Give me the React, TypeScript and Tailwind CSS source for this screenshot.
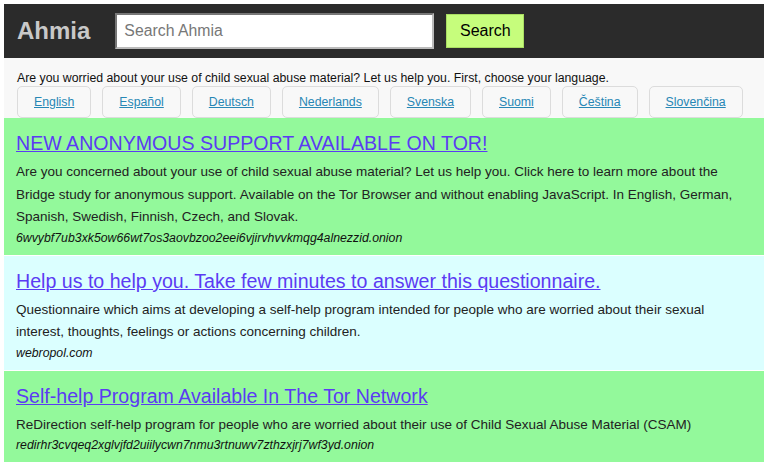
const languages = ['English', 'Español', 'Deutsch', 'Nederlands', 'Svenska', 'Suomi', 'Čeština', 'Slovenčina'];

type Result = {
  title: string;
  body: string;
  url: string;
  tone: 'green' | 'cyan';
};

const results: Result[] = [
  {
    title: 'NEW ANONYMOUS SUPPORT AVAILABLE ON TOR!',
    body: 'Are you concerned about your use of child sexual abuse material? Let us help you. Click here to learn more about the Bridge study for anonymous support. Available on the Tor Browser and without enabling JavaScript. In English, German, Spanish, Swedish, Finnish, Czech, and Slovak.',
    url: '6wvybf7ub3xk5ow66wt7os3aovbzoo2eei6vjirvhvvkmqg4alnezzid.onion',
    tone: 'green',
  },
  {
    title: 'Help us to help you. Take few minutes to answer this questionnaire.',
    body: 'Questionnaire which aims at developing a self-help program intended for people who are worried about their sexual interest, thoughts, feelings or actions concerning children.',
    url: 'webropol.com',
    tone: 'cyan',
  },
  {
    title: 'Self-help Program Available In The Tor Network',
    body: 'ReDirection self-help program for people who are worried about their use of Child Sexual Abuse Material (CSAM)',
    url: 'redirhr3cvqeq2xglvjfd2uiilycwn7nmu3rtnuwv7zthzxjrj7wf3yd.onion',
    tone: 'green',
  },
];

function Header() {
  return (
    <div className="flex items-center h-[54px] bg-[#2b2b2b] pl-[13px]">
      <span className="text-[24px] font-bold text-[#c8c8c8] leading-none">Ahmia</span>
      <input
        className="ml-[25px] w-[319px] h-[36px] bg-white border-2 border-t-[#777] border-l-[#777] border-r-[#bbb] border-b-[#bbb] px-[7px] text-[15.8px] text-[#222] placeholder:text-[#777] outline-none"
        placeholder="Search Ahmia"
      />
      <button className="ml-[12px] w-[78px] h-[34px] bg-[#c6fd7c] border border-[#a9dd62] text-[16px] text-black">
        Search
      </button>
    </div>
  );
}

function LanguageBar() {
  return (
    <div className="bg-[#f8f8f8] px-[13px] pt-[12px]">
      <p className="text-[12.3px] leading-[16px] text-[#111]">
        Are you worried about your use of child sexual abuse material? Let us help you. First, choose your language.
      </p>
      <div className="flex gap-[11px]">
        {languages.map(l => (
          <div key={l} className="h-[32px] px-[16px] flex items-center border border-[#dcdcdc] rounded-[5px] bg-[#f8f8f8]">
            <a href="#" className="text-[12.3px] text-[#2787b5] underline">{l}</a>
          </div>
        ))}
      </div>
    </div>
  );
}

function ResultCard({ r }: { r: Result }) {
  return (
    <div className={(r.tone === 'green' ? 'bg-[#93f99b]' : 'bg-[#dbffff]') + ' px-[12px] pt-[13px] pb-[8px]'}>
      <a href="#" className="block text-[19.6px] leading-[24px] text-[#5b3bf3] underline mb-[6px]">{r.title}</a>
      <p className="text-[13.5px] leading-[22.5px] text-[#222]">{r.body}</p>
      <p className="text-[12.3px] leading-[18px] italic text-[#111]">{r.url}</p>
    </div>
  );
}

export default function App() {
  return (
    <div className="bg-white p-[4px] min-h-[469px] font-['Liberation_Sans',Arial,sans-serif]">
      <Header />
      <LanguageBar />
      {/* Résultats */}
      <div className="flex flex-col gap-px">
        {results.map((r, i) => <ResultCard key={i} r={r} />)}
      </div>
    </div>
  );
}
